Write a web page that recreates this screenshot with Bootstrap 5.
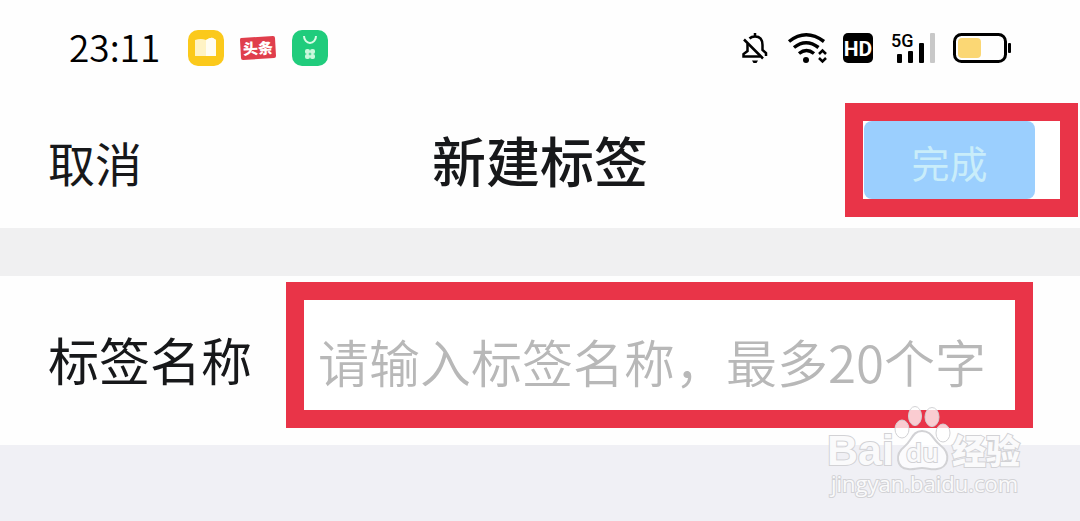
<!DOCTYPE html>
<html lang="zh-CN">
<head>
<meta charset="utf-8">
<meta name="viewport" content="width=device-width, initial-scale=1">
<title>新建标签</title>
<link rel="stylesheet" href="https://cdn.jsdelivr.net/npm/bootstrap@5.3.0/dist/css/bootstrap.min.css">
<style>
  body { background: #f0f0f5; color: #17181a; font-family: "Noto Sans CJK SC", sans-serif; }
  .status-bar { height: 96px; padding: 0 69px; color: #000; background: #fefefe; }
  .clock { font-size: 37px; line-height: 40px; padding-bottom: 4px; font-weight: 350; }
  .status-apps { gap: 15px; margin-left: 28px; }
  .status-system { gap: 18px; }
  .status-bar svg { display: block; overflow: visible; }
  .title-bar { display: grid; grid-template-columns: 1fr auto 1fr; align-items: center; padding: 7px 0 11px; background: #fefefe; }
  .title-bar h1 { font-size: 54px; line-height: 64px; font-weight: 500; }
  .cancel-btn { font-size: 47px; line-height: 60px; padding: 4px 0 0; margin-left: 48px; color: #17181a; border: 0; }
  .highlight { border: 18px solid #e93448; background: #fff; }
  .done-frame { width: 233px; margin-right: 2px; padding-left: 1px; }
  .done-btn, .done-btn:disabled { width: 171px; height: 78px; padding: 4px 0 0; border: 0; border-radius: 8px; background: #9bcffe; color: #c9edfa; font-size: 38px; line-height: 60px; opacity: 1; }
  .spacer { height: 48px; background: #f0f0f1; }
  .name-row { padding: 6px 47px 17px 48px; background: #fefefe; }
  .name-row label { font-size: 51px; line-height: 60px; padding-top: 8px; width: 238px; }
  .name-row .form-control { height: 110px; padding: 12px 0 0 14px; border: 0; border-radius: 0; font-size: 51px; line-height: 60px; font-weight: 350; }
  .name-row .form-control::placeholder { color: #b8b8b8; opacity: 1; }
  .watermark { right: 54px; bottom: 18px; pointer-events: none; }
</style>
</head>
<body>
<div class="position-relative min-vh-100 overflow-hidden">
  <div class="status-bar d-flex align-items-center">
    <span class="clock">23:11</span>
    <div class="status-apps d-flex align-items-center">
      <svg width="36" height="36" viewBox="0 0 36 36" aria-hidden="true">
        <rect width="36" height="36" rx="10" fill="#fbc91b"/>
        <path d="M7 10q6-2 11 0 5-3 7-2l3 2v16H7z" fill="#fff3c4"/>
        <path d="M18 10q5-3 7-2l3 2v16H18z" fill="#fffdf2"/>
      </svg>
      <svg width="38" height="26" viewBox="0 0 38 26" aria-hidden="true">
        <path d="M2 3 34 1q2 0 2 2l1 18q0 2-2 2L4 25q-2 0-2-2L1 5q0-2 1-2z" fill="#e03e4c"/>
        <text x="4" y="19" font-size="15" font-weight="900" fill="#fff" transform="rotate(-3 19 13)">头条</text>
      </svg>
      <svg width="36" height="36" viewBox="0 0 36 36" aria-hidden="true">
        <rect width="36" height="36" rx="10" fill="#20cc7c"/>
        <path d="M12 6a6 7 0 0 0 12 0" fill="none" stroke="#d8fbe5" stroke-width="2"/>
        <g fill="#c8f8dc"><rect x="13" y="19" width="5" height="5" rx="2"/><rect x="18" y="19" width="5" height="5" rx="2"/><rect x="13" y="24" width="5" height="5" rx="2"/><rect x="18" y="24" width="5" height="5" rx="2"/></g>
      </svg>
    </div>
    <div class="status-system d-flex align-items-center ms-auto">
      <svg width="28" height="30" viewBox="0 0 28 30" fill="none" stroke="#000" stroke-width="2.500" aria-hidden="true">
        <path d="M8.500 5.500Q10.500 3.500 14 3.500q7.500 0 7.500 8.500v5l3.500 3v3M6.500 10.500V18L2.500 21v2.500H19"/>
        <path d="M3 6.500l19 19M14 0v4"/>
        <path d="M11 27.500h6l-1.500 2.500h-3z" fill="#000" stroke="none"/>
      </svg>
      <svg width="38" height="30" viewBox="0 0 38 30" fill="none" stroke="#000" stroke-width="3.500" aria-hidden="true">
        <path d="M2 8.500Q19-5 37 8.500M7 14.500q12-9.500 24.500 0M12 20.500q7.500-6 15 0"/>
        <circle cx="19" cy="27" r="3" fill="#000" stroke="none"/>
        <path d="M32 21l3.500-3.500L39 21M32 25l3.500 3.500L39 25" stroke-width="2.500"/>
      </svg>
      <svg width="30" height="30" viewBox="0 0 30 30" aria-hidden="true">
        <rect width="30" height="30" rx="5" fill="#000"/>
        <text x="15" y="23" text-anchor="middle" font-family="Liberation Sans Narrow, Roboto" font-size="21" font-weight="700" fill="#fff">HD</text>
      </svg>
      <svg width="44" height="30" viewBox="0 0 44 30" aria-hidden="true">
        <text x="0" y="14" font-family="Roboto" font-size="18" font-weight="500">5G</text>
        <rect x="6" y="21" width="5" height="9" rx="1"/><rect x="17" y="18" width="5" height="12" rx="1"/><rect x="28" y="10" width="5" height="20" rx="1"/><rect x="39" width="5" height="30" rx="1" fill="#c8c8c8"/>
      </svg>
      <svg width="58" height="30" viewBox="0 0 58 30" aria-hidden="true">
        <rect x="1.500" y="1.500" width="51" height="27" rx="7" fill="none" stroke="#000" stroke-width="3"/>
        <rect x="5" y="5" width="23" height="20" rx="4" fill="#fbd774"/><rect x="55" y="10" width="3" height="10" rx="1"/>
      </svg>
    </div>
  </div>

  <header class="title-bar">
    <button type="button" class="btn cancel-btn me-auto">取消</button>
    <h1 class="m-0">新建标签</h1>
    <div class="highlight done-frame ms-auto d-flex">
      <button type="button" class="btn done-btn" disabled>完成</button>
    </div>
  </header>

  <div class="spacer"></div>

  <form class="name-row d-flex align-items-center">
    <label for="tag-name" class="flex-shrink-0">标签名称</label>
    <div class="highlight flex-grow-1">
      <input id="tag-name" type="text" class="form-control shadow-none" maxlength="20" placeholder="请输入标签名称，最多20个字">
    </div>
  </form>

  <svg class="watermark position-absolute" width="200" height="100" viewBox="0 0 200 100" aria-hidden="true">
    <g fill="#fff" fill-opacity=".75" stroke="#d2d2d5" stroke-width="1">
      <ellipse cx="76" cy="26" rx="7" ry="9"/><ellipse cx="89" cy="13" rx="6.500" ry="9.500"/><ellipse cx="106" cy="14" rx="7" ry="9.500"/><ellipse cx="117" cy="30" rx="7" ry="9"/>
      <path d="M96 28c10 0 11 9 18 14 12 9 8 23-3 24-6 1-9-1-15-1s-9 2-14 1c-12-1-13-15-4-22 8-6 8-16 18-16z" stroke-width="2"/>
    </g>
    <g fill="#fafafb" stroke="#d2d2d5" stroke-width="2" paint-order="stroke">
      <text x="1" y="62" font-family="Liberation Sans" font-size="43" font-weight="700">Bai</text>
      <text x="80" y="59" font-family="Open Sans" font-size="26" font-weight="600">du</text>
      <text x="126" y="61" font-size="34" font-weight="900">经验</text>
      <text x="5" y="89" font-family="Open Sans" font-size="22">jingyan.baidu.com</text>
    </g>
  </svg>
</div>
<script src="https://cdn.jsdelivr.net/npm/bootstrap@5.3.0/dist/js/bootstrap.bundle.min.js"></script>
</body>
</html>
